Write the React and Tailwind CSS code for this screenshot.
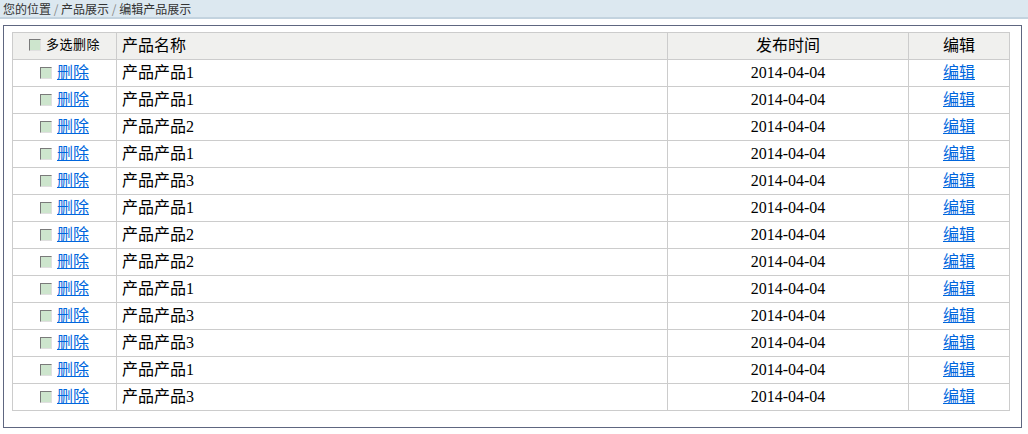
import React from "react";

const rows = [
  "产品产品1",
  "产品产品1",
  "产品产品2",
  "产品产品1",
  "产品产品3",
  "产品产品1",
  "产品产品2",
  "产品产品2",
  "产品产品1",
  "产品产品3",
  "产品产品3",
  "产品产品1",
  "产品产品3",
];

// old-style sunken checkbox
function Check() {
  return (
    <span className="inline-block w-[12px] h-[12px] border border-t-[#7a7a7a] border-l-[#7a7a7a] border-b-[#e0e0e0] border-r-[#e0e0e0] bg-[#cde5cd] align-middle" />
  );
}

export default function App() {
  return (
    <div className="w-[1028px] h-[434px] bg-white font-['Liberation_Serif','Noto_Sans_CJK_SC',serif] text-black">
      {/* breadcrumb */}
      <div className="h-[19px] bg-[#dce8f0] border-b-2 border-[#c3d3df] pl-[3px] text-[12px] leading-[17px] text-[#333] font-['Noto_Sans_CJK_SC',sans-serif]">
        您的位置 <span className="text-[#888]">/</span> 产品展示{" "}
        <span className="text-[#888]">/</span> 编辑产品展示
      </div>

      <div className="mt-[6px] ml-[3px] w-[1019px] h-[403px] border border-[#5e6680] pt-[6px] pl-[8px]">
        <table className="w-[998px] border-collapse text-[16px]">
          <thead>
            <tr className="h-[27px] bg-[#f0f0ee]">
              <th className="w-[104px] border border-[#cccccc] font-normal text-center">
                <span className="inline-flex items-center gap-[5px] text-[13px] tracking-[0.5px]">
                  <Check />
                  多选删除
                </span>
              </th>
              <th className="w-[551px] border border-[#cccccc] font-normal text-left pl-[5px]">
                产品名称
              </th>
              <th className="w-[241px] border border-[#cccccc] font-normal text-center">
                发布时间
              </th>
              <th className="border border-[#cccccc] font-normal text-center">编辑</th>
            </tr>
          </thead>
          <tbody>
            {rows.map((name, i) => (
              <tr key={i} className="h-[27px]">
                <td className="border border-[#cccccc] text-center">
                  <span className="inline-flex items-center gap-[5px]">
                    <Check />
                    <a href="#" className="text-[#0066dd] underline">
                      删除
                    </a>
                  </span>
                </td>
                <td className="border border-[#cccccc] pl-[5px]">{name}</td>
                <td className="border border-[#cccccc] text-center">2014-04-04</td>
                <td className="border border-[#cccccc] text-center">
                  <a href="#" className="text-[#0066dd] underline">
                    编辑
                  </a>
                </td>
              </tr>
            ))}
          </tbody>
        </table>
      </div>
    </div>
  );
}
